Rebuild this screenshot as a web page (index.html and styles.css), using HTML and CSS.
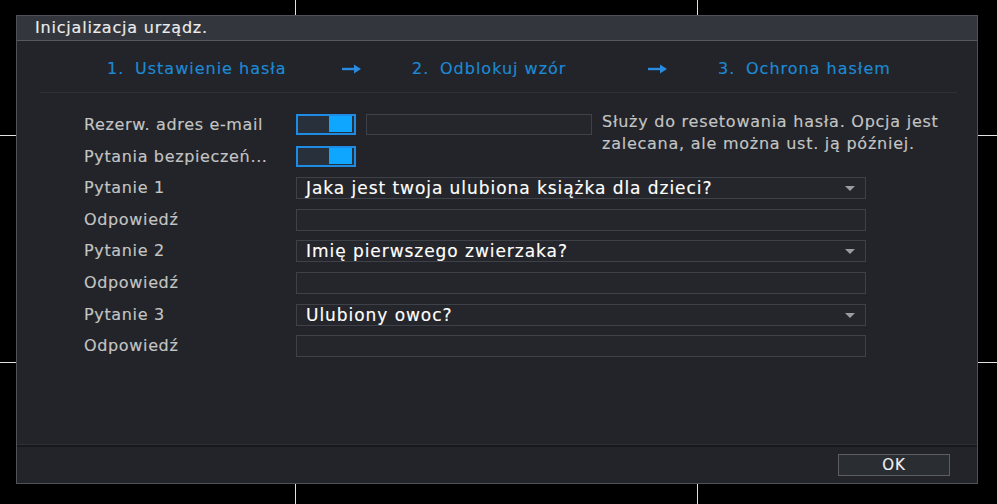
FILE: index.html
```html
<!DOCTYPE html>
<html lang="pl">
<head>
  <meta charset="UTF-8">
  <title>Inicjalizacja urządz.</title>
  <link rel="stylesheet" href="styles.css">
</head>
<body>
  <div class="wall">
    <div class="cell c1"></div><div class="cell c2"></div><div class="cell"></div>
    <div class="cell c1 r2"></div><div class="cell c2 r2"></div><div class="cell r2"></div>
    <div class="cell c1 r3"></div><div class="cell c2 r3"></div><div class="cell r3"></div>
  </div>

  <div class="dialog">
    <div class="titlebar">Inicjalizacja urządz.</div>

    <div class="content">
      <div class="steps">
        <div class="step"><span class="num">1.</span>Ustawienie hasła</div>
        <div class="arrow"><svg width="20" height="10" viewBox="0 0 20 10"><path d="M0 5h13" stroke="#2a8ce0" stroke-width="2.4"/><path d="M12 0.5l7 4.5-7 4.5z" fill="#2a8ce0"/></svg></div>
        <div class="step"><span class="num">2.</span>Odblokuj wzór</div>
        <div class="arrow"><svg width="20" height="10" viewBox="0 0 20 10"><path d="M0 5h13" stroke="#2a8ce0" stroke-width="2.4"/><path d="M12 0.5l7 4.5-7 4.5z" fill="#2a8ce0"/></svg></div>
        <div class="step"><span class="num">3.</span>Ochrona hasłem</div>
      </div>

      <div class="form">
        <div class="label">Rezerw. adres e-mail</div>
        <div class="toggle on"><span class="knob"></span></div>
        <div class="field email"></div>
        <div class="help">Służy do resetowania hasła. Opcja jest<br>zalecana, ale można ust. ją później.</div>

        <div class="label">Pytania bezpieczeń...</div>
        <div class="toggle on"><span class="knob"></span></div>

        <div class="label">Pytanie 1</div>
        <div class="field select">Jaka jest twoja ulubiona książka dla dzieci?</div>
        <div class="label">Odpowiedź</div>
        <div class="field wide"></div>

        <div class="label">Pytanie 2</div>
        <div class="field select">Imię pierwszego zwierzaka?</div>
        <div class="label">Odpowiedź</div>
        <div class="field wide"></div>

        <div class="label">Pytanie 3</div>
        <div class="field select">Ulubiony owoc?</div>
        <div class="label">Odpowiedź</div>
        <div class="field wide"></div>
      </div>
    </div>

    <div class="footer">
      <button class="btn">OK</button>
    </div>
  </div>
</body>
</html>
```

FILE: styles.css
```css
body { margin: 0; width: 997px; height: 504px; background: #000; overflow: hidden; font-family: "DejaVu Sans", sans-serif; font-size: 16px; letter-spacing: 0.65px; color: #c4c4c4; position: relative; -webkit-text-stroke: 0.15px; }

/* video split lines behind the dialog */
.wall { display: grid; grid-template-columns: 296px 402px 1fr; grid-template-rows: 136px 227px 1fr; height: 504px; }
.cell { box-sizing: border-box; border-bottom: 1px solid #e2e2e2; }
.cell.c1, .cell.c2 { border-right: 1px solid #e2e2e2; }
.cell.r3 { border-bottom: none; }

.dialog { position: absolute; left: 16px; top: 15px; width: 962px; height: 469px; box-sizing: border-box; border: 1px solid #4e5157; background: #222429; display: flex; flex-direction: column; }

.titlebar { height: 25px; box-sizing: border-box; border-bottom: 1px solid #55585e; background: #33363c; color: #ececec; padding-left: 18px; line-height: 24px; letter-spacing: 0.8px; }

.content { flex: 1; }

.steps { height: 52px; box-sizing: border-box; padding: 4px 0 0 67px; margin: 0 20px 0 23px; display: grid; grid-template-columns: 235px 70px 236px 70px auto; align-items: center; color: #1d8ad6; letter-spacing: 1px; border-bottom: 1px solid #2e3136; }
.step { white-space: nowrap; }
.num { display: inline-block; width: 28px; }
.arrow { display: flex; align-items: center; height: 24px; }
.arrow svg { display: block; }

.form { margin-top: 21px; padding-left: 67px; display: grid; grid-template-columns: 202px 60px 226px 1fr; grid-auto-rows: 22px; column-gap: 10px; row-gap: 9.6px; }
.label { grid-column: 1; line-height: 22px; white-space: nowrap; }

.toggle { grid-column: 2; width: 60px; height: 21px; box-sizing: border-box; border: 2px solid #1e8ce4; background: #28313b; display: flex; justify-content: flex-end; padding: 0 2px 1px 0; }
.knob { width: 23px; height: 100%; background: #0fa6ff; }

.field { box-sizing: border-box; height: 22px; border: 1px solid #3e4147; background: #24262b; }
.field.email { grid-column: 3; height: 21px; }
.field.wide, .field.select { grid-column: 2 / -1; width: 570px; }
.field.select { position: relative; color: #fff; font-size: 17px; letter-spacing: 0.95px; line-height: 20px; padding-left: 9px; white-space: nowrap; }
.field.select::after { content: ""; position: absolute; right: 10px; top: 8px; border-left: 5px solid transparent; border-right: 5px solid transparent; border-top: 5px solid #9a9ca0; }

.help { grid-column: 4; grid-row: 1 / span 2; line-height: 22px; margin-top: -3px; white-space: nowrap; letter-spacing: 0.75px; }

.footer { height: 38px; box-sizing: border-box; border-top: 2px solid #16181b; box-shadow: 0 -1px 0 #2c2f34; display: flex; align-items: center; justify-content: flex-end; padding-right: 27px; }
.btn { width: 112px; height: 22px; border: 1px solid #5a5d63; background: #2a2d32; color: #f0f0f0; font-family: "DejaVu Sans", sans-serif; font-size: 15px; letter-spacing: 1px; padding: 0; }
```
